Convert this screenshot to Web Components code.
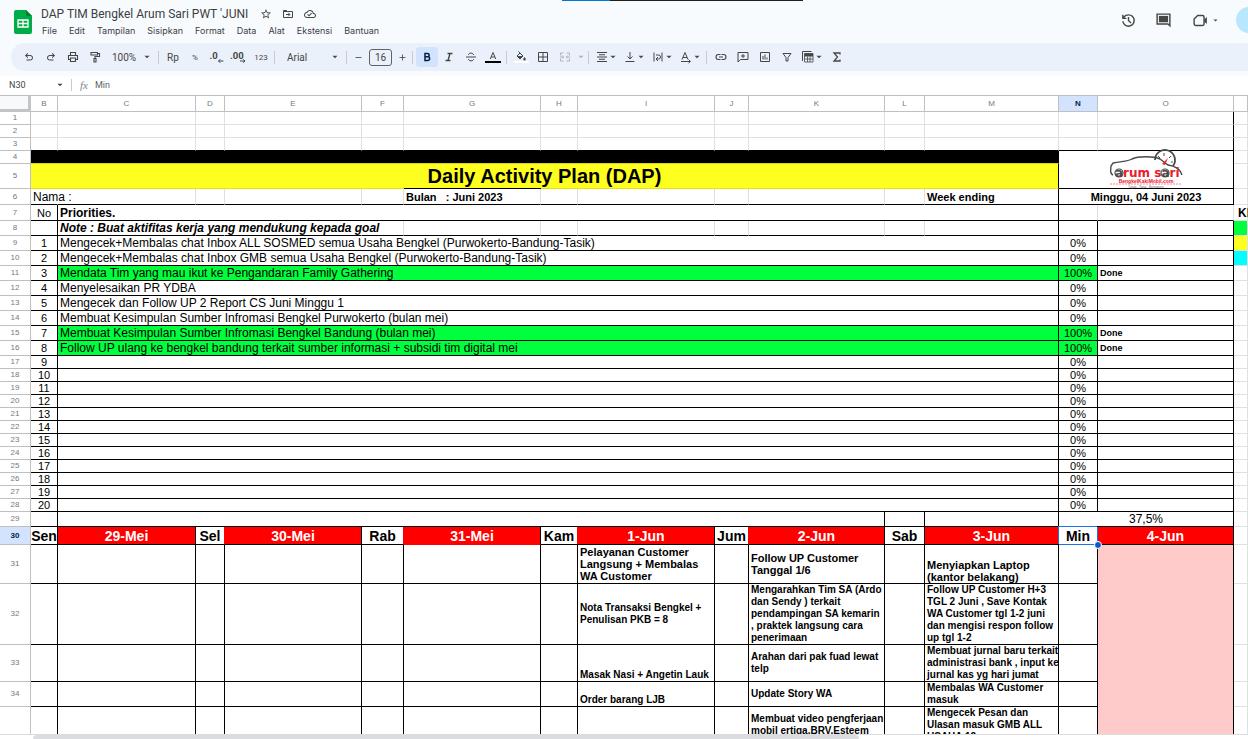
<!DOCTYPE html>
<html lang="id">
<head>
<meta charset="utf-8">
<title>DAP TIM Bengkel Arum Sari PWT 'JUNI</title>
<style>
html, body{
    height: 100%;
    margin: 0;
}

body{
    background: #fff;
    color: #444746;
    font-family: Roboto, "Liberation Sans", sans-serif;
    overflow: hidden;
}
</style>
</head>
<body>

<sheet-app>
    <doc-header slot="header" name="DAP TIM Bengkel Arum Sari PWT 'JUNI">
        <a slot="menu" href="#file">File</a>
        <a slot="menu" href="#edit">Edit</a>
        <a slot="menu" href="#view">Tampilan</a>
        <a slot="menu" href="#insert">Sisipkan</a>
        <a slot="menu" href="#format">Format</a>
        <a slot="menu" href="#data">Data</a>
        <a slot="menu" href="#tools">Alat</a>
        <a slot="menu" href="#extensions">Ekstensi</a>
        <a slot="menu" href="#help">Bantuan</a>
    </doc-header>

    <tool-bar slot="toolbar">
        <tool-button icon="undo" label="Urungkan"></tool-button>
        <tool-button icon="redo" label="Ulangi"></tool-button>
        <tool-button icon="print" label="Cetak"></tool-button>
        <tool-button icon="paint" label="Format cat"></tool-button>
        <tool-select class="zoom" label="Zoom" value="100%"></tool-select>
        <hr>
        <tool-button label="Format sebagai mata uang">Rp</tool-button>
        <tool-button class="small" label="Format sebagai persen">%</tool-button>
        <tool-button icon="dec-less" label="Kurangi desimal"></tool-button>
        <tool-button icon="dec-more" label="Tambah desimal"></tool-button>
        <tool-button class="small" label="Format lainnya">123</tool-button>
        <hr>
        <tool-select class="font" label="Font" value="Arial"></tool-select>
        <hr>
        <tool-button class="step" icon="minus" label="Kurangi ukuran font"></tool-button>
        <input class="size" aria-label="Ukuran font" value="16">
        <tool-button class="step" icon="plus" label="Tambah ukuran font"></tool-button>
        <hr>
        <tool-button class="active" icon="bold" label="Tebal"></tool-button>
        <tool-button icon="italic" label="Miring"></tool-button>
        <tool-button icon="strike" label="Coret"></tool-button>
        <tool-button icon="color" label="Warna teks"></tool-button>
        <hr>
        <tool-button icon="fill" label="Warna isi"></tool-button>
        <tool-button icon="borders" label="Batas"></tool-button>
        <tool-button class="off" icon="merge" label="Gabungkan sel"></tool-button>
        <tool-button class="off caret" icon="caret" label="Jenis gabungan"></tool-button>
        <hr>
        <tool-button menu icon="align" label="Perataan horizontal"></tool-button>
        <tool-button menu icon="valign" label="Perataan vertikal"></tool-button>
        <tool-button menu icon="wrap" label="Penggabungan teks"></tool-button>
        <tool-button menu icon="rotate" label="Rotasi teks"></tool-button>
        <hr>
        <tool-button icon="link" label="Sisipkan link"></tool-button>
        <tool-button icon="comment" label="Sisipkan komentar"></tool-button>
        <tool-button icon="chart" label="Sisipkan diagram"></tool-button>
        <tool-button icon="filter" label="Buat filter"></tool-button>
        <tool-button menu icon="views" label="Tampilan tabel"></tool-button>
        <tool-button icon="sigma" label="Fungsi"></tool-button>
    </tool-bar>

    <formula-bar slot="formula" cell="N30" value="Min"></formula-bar>
    <sheet-grid></sheet-grid>
</sheet-app>

<script>
const line = (d, w = 2) => `<path d="${d}" fill="none" stroke="currentColor" stroke-width="${w}"/>`;
const fill = d => `<path d="${d}"/>`;

// all icons are drawn on a 24 x 24 box
const ICONS = {
    star: fill('M22 9.24l-7.19-.62L12 2 9.19 8.63 2 9.24l5.46 4.73L5.82 21 12 17.27 18.18 21l-1.63-7.03L22 9.24zM12 15.4l-3.76 2.27 1-4.28-3.32-2.88 4.38-.38L12 6.1l1.71 4.04 4.38.38-3.32 2.88 1 4.28L12 15.4z'),
    move: line('M3 5h6l2 2h10v12H3zM3 7h8') + line('M8 13h7M12.500 9.500l3.500 3.500-3.500 3.500'),
    cloud: fill('M19.35 10.04C18.67 6.59 15.64 4 12 4 9.11 4 6.6 5.64 5.35 8.04 2.34 8.36 0 10.91 0 14c0 3.31 2.69 6 6 6h13c2.76 0 5-2.24 5-5 0-2.64-2.05-4.78-4.65-4.96zM19 18H6c-2.21 0-4-1.79-4-4 0-2.05 1.53-3.76 3.56-3.97l1.07-.11.5-.95C8.08 7.14 9.94 6 12 6c2.62 0 4.88 1.86 5.39 4.43l.3 1.5 1.53.11c1.56.1 2.78 1.41 2.78 2.96 0 1.65-1.35 3-3 3zm-9-3.82l-2.09-2.09L6.5 13.5 10 17l6.01-6.01-1.41-1.41z'),
    history: fill('M12 21q-3.45 0-6.010-2.290T3.050 13H5.100q.350 2.600 2.310 4.300T12 19q2.930 0 4.960-2.040T19 12t-2.040-4.960T12 5q-1.730 0-3.230.800T6.250 8H9v2H3V4h2v2.350q1.280-1.600 3.110-2.470T12 3q1.880 0 3.510.710t2.850 1.930 1.930 2.850T21 12t-.710 3.510-1.930 2.850-2.850 1.930T12 21m2.800-4.800L11 12.400V7h2v4.600l3.200 3.200z'),
    chat: fill('M2 2h20v20l-4-4H2zM4 4v12h14.800l1.200 1.200V4z') + fill('M5.500 5.500h13v9h-13z'),
    video: line('M8 5h7a2 2 0 0 1 2 2v10a2 2 0 0 1-2 2H5a2 2 0 0 1-2-2V10z', 2) + fill('M17 11l4-4v10l-4-4z'),
    undo: fill('M7 19v-2h7.100q1.575 0 2.738-1T18 13.500 16.838 11 14.100 10H7.800l2.600 2.600L9 14 4 9l5-5 1.400 1.400L7.800 8h6.300q2.425 0 4.163 1.575T20 13.500t-1.737 3.925T14.100 19z'),
    redo: '<g transform="matrix(-1 0 0 1 24 0)">' + fill('M7 19v-2h7.100q1.575 0 2.738-1T18 13.500 16.838 11 14.100 10H7.800l2.600 2.600L9 14 4 9l5-5 1.400 1.400L7.800 8h6.300q2.425 0 4.163 1.575T20 13.500t-1.737 3.925T14.100 19z') + '</g>',
    print: line('M7 8V3h10v5M7 17H3V9h18v8h-4M7 14h10v7H7z', 2.200),
    paint: line('M4 3h13v5H4zM17 5h4v6h-9v4', 2.200) + line('M10 15h4v7h-4z', 2.200),
    'dec-less': '<text x="-3" y="15" font-size="19" font-weight="700">.0</text>' + line('M25 20h-10M18.500 16.500L15 20l3.500 3.500'),
    'dec-more': '<text x="-6" y="15" font-size="19" font-weight="700">.00</text>' + line('M14 20h10M20.500 16.500L24 20l-3.500 3.500'),
    minus: line('M4 12h16', 2.200),
    plus: line('M4 12h16M12 4v16', 2.200),
    bold: line('M8 5h5a3.300 3.300 0 0 1 0 6.700H8zM8 11.700h5.600a3.600 3.600 0 0 1 0 7.300H8z', 3),
    italic: line('M9 5h10M5 19h10M14 5l-4 14', 2.800),
    strike: line('M2 12h20M17 8c0-5-10-5-10-.500M7 16c0 5 10 5 10 .500'),
    color: line('M6.500 16L12 3l5.500 13M8.500 12h7') + '<path d="M-4 20h32v4H-4z" fill="#000"/>',
    fill: line('M7 1l9 9-6 6-6-6 6-6') + fill('M5 10h11l-6 6zM19 12q2.500 3 2.500 4.500a2.500 2.500 0 0 1-5 0Q16.500 15 19 12z') + '<path d="M-4 20h32v4H-4z" fill="#fff"/>',
    borders: line('M3 3h18v18H3zM12 3v18M3 12h18'),
    merge: line('M9 4H3v5M3 15v5h6M15 4h6v5M21 15v5h-6M2 12h7M22 12h-7M6.500 9l3 3-3 3M17.500 9l-3 3 3 3'),
    caret: fill('M2 7h20L12 17z'),
    align: line('M2 3h20M6 7.500h12M2 12h20M6 16.500h12M2 21h20'),
    valign: line('M3 21h18M12 2v14M7 11l5 5 5-5'),
    wrap: line('M4 3v18M20 3v18M8 8h5a4 4 0 0 1 0 8H9M12 12l-4 4 4 4'),
    rotate: line('M4 17L10 3l6 14M6 13h8M2 21h18M17 17l4 4-4 3'),
    link: line('M11 7H7a5 5 0 0 0 0 10h4M13 7h4a5 5 0 0 1 0 10h-4M8 12h8', 2.200),
    comment: line('M2 3h20v14H7l-5 5zM12 6v8M8 10h8'),
    chart: line('M3 3h18v18H3zM8 10v7M12 7v10M16 13v4'),
    filter: line('M4 5h16l-6 8v7h-4v-7z'),
    views: line('M1 20V1h18', 2) + line('M5 5h17v17H5zM5 16h17M11 11v11M16 11v11', 1.600) + fill('M5 5h17v6H5z'),
    sigma: line('M18 7V4H6l7 8-7 8h12v-3', 2.600)
};

class SheetIcon extends HTMLElement {
    constructor() {
        super();
        this.attachShadow({mode: 'open'});
    }

    connectedCallback() {
        this.shadowRoot.innerHTML = `
<style>
:host{
    display: block;
    flex: none;
    width: 12px;
    height: 12px;
}

svg{
    display: block;
    width: 100%;
    height: 100%;
    overflow: visible;
    fill: currentColor;
}
</style>
<svg viewBox="0 0 24 24" aria-hidden="true">${ICONS[this.getAttribute('name')]}</svg>`;
    }
}

class ToolButton extends HTMLElement {
    connectedCallback() {
        const icon = this.getAttribute('icon');
        this.attachShadow({mode: 'open'});
        this.shadowRoot.innerHTML = `
<style>
:host{
    display: block;
    flex: none;
    width: 22px;
    height: 20px;
}

:host([menu]){
    width: 28px;
}

:host(.step){
    width: 16px;
}

:host(.caret){
    width: 10px;
}

:host(.off){
    color: #b0b3b8;
}

:host(.active){
    color: #041e49;
}

button{
    display: flex;
    align-items: center;
    justify-content: center;
    gap: 2px;
    width: 100%;
    height: 100%;
    padding: 0;
    border: 0;
    border-radius: 3px;
    background: none;
    color: inherit;
    font: inherit;
}

:host(.active) button{
    background: #d3e3fd;
}

:host(.small) button{
    font-size: 8px;
}

:host(.step) sheet-icon{
    width: 9px;
    height: 9px;
}

sheet-icon[name="caret"]{
    width: 6px;
    height: 6px;
}
</style>
<button type="button" aria-label="${this.getAttribute('label')}">
    ${icon ? `<sheet-icon name="${icon}"></sheet-icon>` : ''}<slot></slot>
    ${this.hasAttribute('menu') ? '<sheet-icon name="caret"></sheet-icon>' : ''}
</button>`;
    }
}

class ToolSelect extends HTMLElement {
    connectedCallback() {
        this.attachShadow({mode: 'open'});
        this.shadowRoot.innerHTML = `
<style>
:host{
    display: flex;
    align-items: center;
    flex: none;
    box-sizing: border-box;
    padding: 0 6px;
}

select{
    flex: 1;
    min-width: 0;
    padding: 0;
    border: 0;
    appearance: none;
    background: none;
    color: inherit;
    font: inherit;
}

sheet-icon{
    width: 6px;
    height: 6px;
}
</style>
<select aria-label="${this.getAttribute('label')}"><option>${this.getAttribute('value')}</option></select>
<sheet-icon name="caret"></sheet-icon>`;
    }
}

class ToolBar extends HTMLElement {
    constructor() {
        super();
        this.attachShadow({mode: 'open'});
        this.shadowRoot.innerHTML = `
<style>
:host{
    display: flex;
    align-items: center;
    height: 28px;
    margin: 0 0 5px 11px;
    padding-left: 7px;
    border-radius: 14px 0 0 14px;
    background: #ebf1fa;
    font-size: 10px;
    overflow: hidden;
}

::slotted(hr){
    flex: none;
    width: 1px;
    height: 13px;
    margin: 0 3px 0 2px;
    border: 0;
    background: #c7cad0;
}

::slotted(.zoom){
    width: 50px;
}

::slotted(.font){
    width: 66px;
    padding-left: 9px;
}

::slotted(.size){
    box-sizing: border-box;
    flex: none;
    width: 23px;
    height: 17px;
    margin: 0 2px 0 3px;
    padding: 0;
    border: 1px solid #5f6368;
    border-radius: 3px;
    background: none;
    color: inherit;
    font: inherit;
    text-align: center;
}
</style>
<slot></slot>`;
    }
}

class DocHeader extends HTMLElement {
    connectedCallback() {
        this.attachShadow({mode: 'open'});
        this.shadowRoot.innerHTML = `
<style>
:host{
    display: flex;
    position: relative;
    height: 43px;
    overflow: hidden;
}

.tab{
    position: absolute;
    top: 0;
    left: 45%;
    width: 241px;
    height: 1px;
    background: linear-gradient(to right, #0078d4 48px, #1f1f1f 48px);
}

.logo{
    width: 18px;
    height: 24px;
    margin: 10px 9px 0 14px;
}

.titles{
    display: flex;
    flex-direction: column;
    padding-top: 6px;
}

.name{
    display: flex;
    align-items: center;
    gap: 10px;
    height: 16px;
}

h1{
    margin: 0 2px 0 0;
    color: #3c4043;
    font-size: 12px;
    font-weight: 400;
}

nav{
    display: flex;
    gap: 12px;
    padding: 3px 0 0 1px;
    font-family: Inter, Roboto, sans-serif;
    font-size: 9px;
    line-height: 12px;
}

::slotted(a){
    color: #3c4043;
    text-decoration: none;
}

button{
    display: block;
    padding: 0;
    border: 0;
    background: none;
    color: inherit;
}

.actions{
    display: flex;
    align-items: center;
    gap: 18px;
    height: 40px;
    margin-left: auto;
}

.actions sheet-icon{
    width: 17px;
    height: 17px;
}

.meet{
    display: flex;
    align-items: center;
    gap: 4px;
    margin-left: 2px;
}

.meet sheet-icon[name="caret"]{
    width: 5px;
    height: 5px;
}

.share{
    width: 26px;
    height: 26px;
    margin-right: -14px;
    border-radius: 13px;
    background: #b9e7ff;
}
</style>
<div class="tab"></div>
<svg class="logo" viewBox="0 0 18 24" aria-hidden="true">
    <path d="M2 0h10l6 6v16a2 2 0 0 1-2 2H2a2 2 0 0 1-2-2V2a2 2 0 0 1 2-2z" fill="#00ac47"/>
    <path d="M12 0l6 6h-6z" fill="#00832d"/>
    <path d="M4 10h10v7H4zM4 13.500h10M9 10v7" fill="none" stroke="#fff" stroke-width="1.300"/>
</svg>
<div class="titles">
    <div class="name">
        <h1>${this.getAttribute('name')}</h1>
        <button type="button" aria-label="Bintangi"><sheet-icon name="star"></sheet-icon></button>
        <button type="button" aria-label="Pindahkan"><sheet-icon name="move"></sheet-icon></button>
        <button type="button" aria-label="Status dokumen"><sheet-icon name="cloud"></sheet-icon></button>
    </div>
    <nav><slot name="menu"></slot></nav>
</div>
<div class="actions">
    <button type="button" aria-label="Histori versi"><sheet-icon name="history"></sheet-icon></button>
    <button type="button" aria-label="Komentar"><sheet-icon name="chat"></sheet-icon></button>
    <button class="meet" type="button" aria-label="Meet">
        <sheet-icon name="video"></sheet-icon><sheet-icon name="caret"></sheet-icon>
    </button>
    <button class="share" type="button" aria-label="Bagikan"></button>
</div>`;
    }
}

class FormulaBar extends HTMLElement {
    connectedCallback() {
        this.attachShadow({mode: 'open'});
        this.shadowRoot.innerHTML = `
<style>
:host{
    display: flex;
    align-items: center;
    box-sizing: border-box;
    height: 19px;
    padding-bottom: 2px;
    background: #fff;
    font-size: 9px;
}

input{
    box-sizing: border-box;
    min-width: 0;
    padding: 0;
    border: 0;
    background: none;
    color: inherit;
    font: inherit;
}

.cell{
    width: 57px;
    padding-left: 9px;
}

.value{
    flex: 1;
    color: #5f6368;
}

sheet-icon{
    width: 6px;
    height: 6px;
}

hr{
    width: 1px;
    height: 12px;
    margin: 0 8px;
    border: 0;
    background: #c7cad0;
}

i{
    width: 15px;
    color: #80868b;
    font: italic 11px "Liberation Serif", serif;
}
</style>
<input class="cell" aria-label="Kotak nama" value="${this.getAttribute('cell')}">
<sheet-icon name="caret"></sheet-icon>
<hr>
<i>fx</i>
<input class="value" aria-label="Formula" value="${this.getAttribute('value')}">`;
    }
}

class ShopLogo extends HTMLElement {
    constructor() {
        super();
        this.attachShadow({mode: 'open'});
        this.shadowRoot.innerHTML = `
<style>
:host{
    display: block;
    width: 76px;
    height: 36px;
    margin: 0 auto;
    white-space: normal;
}

svg{
    display: block;
    overflow: visible;
}
</style>
<svg width="76" height="36" viewBox="0 0 76 36">
    <g fill="none" stroke="#4a4a4a">
        <path d="M5 23C1 21 3 18 3 14l2-3C13 9 19 10 24 7c6-3 22-3 28 0l8 6c8 1 12 4 14 10" stroke-width="1.400"/>
        <path d="M47 8a10 10 0 1 1 18 6" stroke-width="1.800"/>
        <path d="M56 1v3M50 4l2 2M63 4l-2 2M65 10h-2" stroke-width="1"/>
    </g>
    <path d="M54 12l6-6-3 7z" fill="#e22"/>
    <text x="7" y="25" font-family="DejaVu Sans" font-weight="700" font-size="12" fill="#e8202a"><tspan fill="#4a4a4a">a</tspan>rum s<tspan fill="#4a4a4a">a</tspan>ri</text>
    <g fill="none" stroke="#4a4a4a" stroke-width="1.200">
        <circle cx="11" cy="21" r="4"/>
        <circle cx="57" cy="21" r="4"/>
    </g>
    <text x="38" y="31" text-anchor="middle" font-family="Liberation Sans" font-weight="700" font-size="5" fill="#e8202a">BengkelKakiMobil.com</text>
    <path d="M2 32h72" stroke="#f2888c" stroke-width="1" stroke-dasharray="2 1"/>
    <text x="38" y="36" text-anchor="middle" font-family="Liberation Sans" font-size="3" fill="#666">Cepat - Tepat - Bergaransi</text>
</svg>`;
    }
}

// widths of the row numbers and columns B to O, the last column takes the rest
const WIDTHS = [31, 27, 138, 29, 137, 42, 137, 37, 137, 34, 136, 40, 134, 39, 136];
const COLUMNS = [...'BCDEFGHIJKLMNO', ''];

// c(text, classes, colspan, rowspan)
const c = (text = '', cls = '', span = 1, rows = 1) => ({text, cls, span, rows});
const many = (n, cls) => Array.from({length: n}, () => c('', cls));

const priorities = [
    ['Mengecek+Membalas chat Inbox ALL SOSMED semua Usaha Bengkel (Purwokerto-Bandung-Tasik)', '0%'],
    ['Mengecek+Membalas chat Inbox GMB semua Usaha Bengkel (Purwokerto-Bandung-Tasik)', '0%'],
    ['Mendata Tim yang mau ikut ke Pengandaran Family Gathering', '100%'],
    ['Menyelesaikan PR YDBA', '0%'],
    ['Mengecek dan Follow UP 2 Report CS Juni Minggu 1', '0%'],
    ['Membuat Kesimpulan Sumber Infromasi Bengkel Purwokerto (bulan mei)', '0%'],
    ['Membuat Kesimpulan Sumber Infromasi Bengkel Bandung (bulan mei)', '100%'],
    ['Follow UP ulang ke bengkel bandung terkait sumber informasi + subsidi tim digital mei', '100%']
];

const rows = [
    [13, [...many(13), c('', 'kr'), c()]],
    [13, [...many(13), c('', 'kr'), c()]],
    [13, [...many(13, 'kb'), c('', 'k'), c()]],
    [13, [c('', 'black', 12), c('<shop-logo></shop-logo>', 'k', 2, 2), c()]],
    [25, [c('Daily Activity Plan (DAP)', 'yellow title', 12), c()]],
    [16, [c('Nama :', 'kb nr t12'), c('', 'kb'), c('', 'kb'), c('', 'kb'), c('', 'kb'), c('Bulan   : Juni 2023', 'kb kt b11'),
        ...many(5, 'kb'), c('Week ending', 'k b11'), c('Minggu, 04 Juni 2023', 'k b11 mid', 2), c()]],
    [16, [c('No', 'k t11 mid'), c('Priorities.', 'k b12', 11), c('', 'kb'), c('', 'kb'), c('KETERANGAN', 'b12 key')]],
    [15, [c('', 'k'), c('Note : Buat aktifitas kerja yang mendukung kepada goal', 'kb nr b12 it'), c('', 'kb nr'), c('', 'kb nr'),
        ...many(7, 'kb'), c('', 'k'), c('', 'k'), c('', 'k'), c('', 'green')]]
];

for (let n = 1; n <= 20; n++) {
    const [text, done] = priorities[n - 1] || ['', '0%'];
    const paint = done === '100%' ? ' green' : '';
    const key = {1: 'bright', 2: 'cyan'}[n] || '';
    rows.push([n <= 8 ? 15 : 13, [c(n, 'k t11 mid'), c(text, 'k t12' + paint, 11), c(done, 'k t11 mid' + paint),
        c(paint ? 'Done' : '', 'k b9'), c('', key)]]);
}

rows.push(
    [15, [c('', 'k'), c('', 'k', 9), c('', 'k'), c('', 'k'), c('37,5%', 'k t12 mid', 2), c()]],
    [18, [c('Sen', 'k day'), c('29-Mei', 'k day red'), c('Sel', 'k rr day'), c('30-Mei', 'k day red'), c('Rab', 'k rr day'),
        c('31-Mei', 'k rb day red'), c('Kam', 'k rr day'), c('1-Jun', 'k day red'), c('Jum', 'k rr day'), c('2-Jun', 'k day red'),
        c('Sab', 'k day'), c('3-Jun', 'k day red'), c('Min<span></span>', 'k day selected'), c('4-Jun', 'k day red'), c()]],
    [39, [...many(7, 'k'), c('Pelayanan Customer\nLangsung + Membalas\nWA Customer', 'k b11'), c('', 'k'),
        c('Follow UP Customer\nTanggal 1/6', 'k b11'), c('', 'k'), c('Menyiapkan Laptop\n(kantor belakang)', 'k b11 low'),
        c('', 'k'), c('', 'kr pink', 1, 5), c()]],
    [61, [...many(7, 'k'), c('Nota Transaksi Bengkel +\nPenulisan PKB = 8', 'k b10'), c('', 'k'),
        c('Mengarahkan Tim SA (Ardo\ndan Sendy ) terkait\npendampingan SA kemarin\n, praktek langsung cara\npenerimaan', 'k b10'), c('', 'k'),
        c('Follow UP Customer H+3\nTGL 2 Juni , Save Kontak\nWA Customer tgl 1-2 juni\ndan mengisi respon follow\nup tgl 1-2', 'k b10'),
        c('', 'k'), c()]],
    [37, [...many(7, 'k'), c('Masak Nasi + Angetin Lauk', 'k b10 low'), c('', 'k'), c('Arahan dari pak fuad lewat\ntelp', 'k b10'), c('', 'k'),
        c('Membuat jurnal baru terkait\nadministrasi bank , input ke\njurnal kas yg hari jumat', 'k b10'), c('', 'k'), c()]],
    [25, [...many(7, 'k'), c('Order barang LJB', 'k b10 low'), c('', 'k'), c('Update Story WA', 'k b10'), c('', 'k'),
        c('Membalas WA Customer\nmasuk', 'k b10'), c('', 'k'), c()]],
    [61, [...many(7, 'k'), c('', 'k'), c('', 'k'), c('Membuat video pengferjaan\nmobil ertiga,BRV,Esteem', 'k b10 clip'), c('', 'k'),
        c('Mengecek Pesan dan\nUlasan masuk GMB ALL\nUSAHA 12', 'k b10 top'), c('', 'k'), c()]]
);

class SheetGrid extends HTMLElement {
    constructor() {
        super();
        this.attachShadow({mode: 'open'});
        this.shadowRoot.innerHTML = `
<style>
:host{
    display: flex;
    flex-direction: column;
    flex: 1;
    min-height: 0;
    color: #000;
    font-family: "Liberation Sans", Arial, sans-serif;
}

.view{
    flex: 1;
    min-height: 0;
    overflow: hidden;
}

table{
    width: 100%;
    table-layout: fixed;
    border-collapse: separate;
    border-spacing: 0;
    border-top: 1px solid #c0c0c0;
}

th, td{
    box-sizing: border-box;
    padding: 0 2px;
    border: 0 solid #e0e0e0;
    border-width: 0 1px 1px 0;
    font-size: 8px;
    line-height: 12px;
    text-align: left;
    white-space: pre;
}

th{
    padding: 0;
    border-color: #c0c0c0;
    color: #73797d;
    font-weight: 400;
    line-height: 8px;
    text-align: center;
}

th.corner{
    border: 3px solid #c4c4c4;
    border-width: 0 3px 3px 0;
    background: #f8f9fa;
}

th.on{
    background: #d3e3fd;
    color: #041e49;
    font-weight: 700;
}

td.k{ border-color: #000; }
td.kb{ border-bottom-color: #000; }
td.kr{ border-right-color: #000; }
td.kt{ box-shadow: 0 -1px 0 #000; }
td.nr{ border-right-color: transparent; }
td.rr{ border-right-color: #f00; }
td.rb{ border-bottom-color: #f00; }

td.black{ background: #000; border-color: #000 #000 #d9d31e; }
td.yellow{ background: #ffff1f; border-color: #000 #000 #e6de17; }
td.bright{ background: #ffff1f; }
td.green{ background: #00ff3c; }
td.cyan{ background: #0ff; }
td.pink{ background: #ffcaca; }
td.red{ background: #f00; color: #fff; }

td.t11{ font-size: 11px; }
td.t12{ font-size: 12px; }
td.b9{ font-size: 9px; font-weight: 700; }
td.b10{ font-size: 10px; font-weight: 700; }
td.b11{ font-size: 11px; font-weight: 700; }
td.b12{ font-size: 12px; font-weight: 700; }
td.it{ font-style: italic; }

td.mid{ padding: 0; text-align: center; }
td.key{ padding-left: 4px; }
td.low{ vertical-align: bottom; }
td.top, td.clip{ vertical-align: top; }
td.clip{ padding-top: 6px; }

td.title{
    font-size: 20px;
    font-weight: 700;
    line-height: 24px;
    text-align: center;
}

td.day{
    padding: 0;
    font-size: 14px;
    font-weight: 700;
    line-height: 16px;
    text-align: center;
}

td.selected{
    position: relative;
    border-color: #1a73e8;
    box-shadow: -1px -1px 0 #1a73e8;
}

td.selected span{
    position: absolute;
    right: -5px;
    bottom: -5px;
    width: 6px;
    height: 6px;
    border: 1px solid #fff;
    border-radius: 50%;
    background: #0b57d0;
    z-index: 1;
}

.scroll{
    flex: none;
    height: 4px;
    border-top: 1px solid #dcdcdc;
    background: #fff;
    overflow: hidden;
}

.thumb{
    width: 66.2%;
    height: 8px;
    margin-left: 33px;
    border-radius: 4px;
    background: #dadce0;
}
</style>
<div class="view">
    <table>
        <colgroup>${WIDTHS.map(w => `<col style="width: ${w}px">`).join('')}<col></colgroup>
        <thead><tr style="height: 16px"><th class="corner"></th>${COLUMNS.map(name =>
            `<th scope="col" class="${name === 'N' ? 'on' : ''}">${name}</th>`).join('')}</tr></thead>
        <tbody>${rows.map(([height, cells], i) => `<tr style="height: ${height}px"><th scope="row" class="${i === 29 ? 'on' : ''}">${i < 34 ? i + 1 : ''}</th>${
            cells.map(x => `<td class="${x.cls}" colspan="${x.span}" rowspan="${x.rows}">${x.text}</td>`).join('')}</tr>`).join('')}</tbody>
    </table>
</div>
<div class="scroll"><div class="thumb"></div></div>`;
    }
}

class SheetApp extends HTMLElement {
    constructor() {
        super();
        this.attachShadow({mode: 'open'});
        this.shadowRoot.innerHTML = `
<style>
:host{
    display: flex;
    flex-direction: column;
    height: 100vh;
    overflow: hidden;
}

header{
    flex: none;
    background: #f8fbfe;
    overflow: hidden;
}
</style>
<header>
    <slot name="header"></slot>
    <slot name="toolbar"></slot>
</header>
<slot name="formula"></slot>
<slot></slot>`;
    }
}

window.customElements.define('sheet-icon', SheetIcon);
window.customElements.define('tool-button', ToolButton);
window.customElements.define('tool-select', ToolSelect);
window.customElements.define('tool-bar', ToolBar);
window.customElements.define('doc-header', DocHeader);
window.customElements.define('formula-bar', FormulaBar);
window.customElements.define('shop-logo', ShopLogo);
window.customElements.define('sheet-grid', SheetGrid);
window.customElements.define('sheet-app', SheetApp);
</script>
</body>
</html>
